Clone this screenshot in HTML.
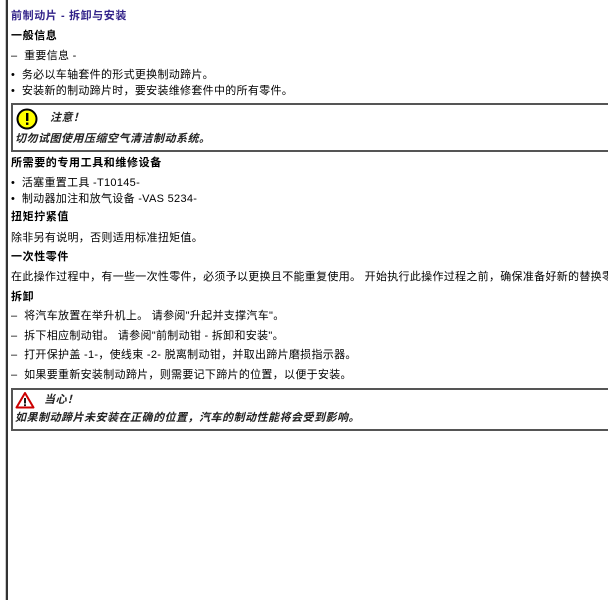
<!DOCTYPE html>
<html><head><meta charset="utf-8"><style>
body{margin:0;width:608px;height:600px;overflow:hidden;background:#fff;position:relative;font-family:"Liberation Sans","Noto Sans CJK SC",sans-serif;font-size:11px;color:#000}
.vl{position:absolute;left:5px;top:0;width:2px;height:600px;background:#333;border-left:1px solid #ccc}
.t{position:absolute;left:11px;white-space:nowrap;line-height:14px;letter-spacing:0.3px}
.b{font-weight:bold;letter-spacing:0.6px}
.bx{position:absolute;left:11px;width:620px;border:2px solid #555;border-right:none}
.i{font-style:italic;font-weight:bold;color:#222;letter-spacing:0.5px}
</style></head><body>
<div class="vl"></div>
<div class="t b" style="top:9px;color:#33248a">前制动片 - 拆卸与安装</div>
<div class="t b" style="top:29px">一般信息</div>
<div class="t" style="top:49px">–&nbsp; 重要信息 -</div>
<div class="t" style="top:68px">•&nbsp; 务必以车轴套件的形式更换制动蹄片。</div>
<div class="t" style="top:84px">•&nbsp; 安装新的制动蹄片时，要安装维修套件中的所有零件。</div>
<div class="bx" style="top:103px;height:45px"></div>
<svg style="position:absolute;left:16px;top:108px" width="22" height="22"><circle cx="11" cy="11" r="9.5" fill="#ff0" stroke="#000" stroke-width="2"/><rect x="10" y="5" width="2.4" height="8" fill="#000"/><rect x="10" y="14.5" width="2.4" height="2.4" fill="#000"/></svg>
<div class="t i" style="top:111px;left:50px">注意！</div>
<div class="t i" style="top:132px;left:15px">切勿试图使用压缩空气清洁制动系统。</div>
<div class="t b" style="top:156px">所需要的专用工具和维修设备</div>
<div class="t" style="top:176px">•&nbsp; 活塞重置工具 -T10145-</div>
<div class="t" style="top:192px">•&nbsp; 制动器加注和放气设备 -VAS 5234-</div>
<div class="t b" style="top:210px">扭矩拧紧值</div>
<div class="t" style="top:231px">除非另有说明，否则适用标准扭矩值。</div>
<div class="t b" style="top:250px">一次性零件</div>
<div class="t" style="top:270px">在此操作过程中，有一些一次性零件，必须予以更换且不能重复使用。 开始执行此操作过程之前，确保准备好新的替换零件。</div>
<div class="t b" style="top:290px">拆卸</div>
<div class="t" style="top:309px">–&nbsp; 将汽车放置在举升机上。 请参阅"升起并支撑汽车"。</div>
<div class="t" style="top:329px">–&nbsp; 拆下相应制动钳。 请参阅"前制动钳 - 拆卸和安装"。</div>
<div class="t" style="top:348px">–&nbsp; 打开保护盖 -1-，使线束 -2- 脱离制动钳，并取出蹄片磨损指示器。</div>
<div class="t" style="top:368px">–&nbsp; 如果要重新安装制动蹄片，则需要记下蹄片的位置，以便于安装。</div>
<div class="bx" style="top:388px;height:39px"></div>
<svg style="position:absolute;left:15px;top:391px" width="20" height="18"><path d="M10 2 L18.5 16.5 L1.5 16.5 Z" fill="#fff" stroke="#c00" stroke-width="2" stroke-linejoin="round"/><rect x="9.1" y="7" width="1.8" height="5.5" fill="#000"/><rect x="9.1" y="13.3" width="1.8" height="1.8" fill="#000"/></svg>
<div class="t i" style="top:393px;left:44px">当心！</div>
<div class="t i" style="top:411px;left:15px">如果制动蹄片未安装在正确的位置，汽车的制动性能将会受到影响。</div>
</body></html>
